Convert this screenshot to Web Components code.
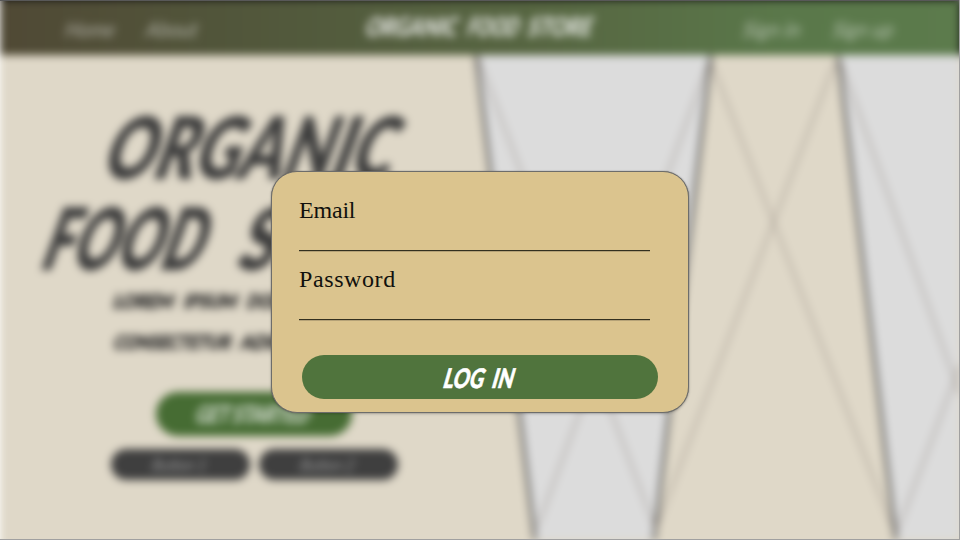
<!DOCTYPE html>
<html lang="en">
<head>
<meta charset="utf-8">
<title>Organic Food Store</title>
<style>
html,body{margin:0;height:100%;overflow:hidden;background:#fff}
</style>
</head>
<body>
<store-app></store-app>
<script>
const define=(name,html,after)=>customElements.define(name,class extends HTMLElement{
  constructor(){super();const t=document.createElement('template');t.innerHTML=html;
    this.attachShadow({mode:'open'}).append(t.content.cloneNode(true));}
  connectedCallback(){if(after)after(this);}
});

// Lettering stretched to the width in its "fit" attribute.
define('brush-text',`<style>
:host{display:flex;justify-content:center;white-space:nowrap;line-height:1;font-family:Lato,"Liberation Sans",sans-serif;font-weight:900}
span{display:block;flex:none;transform-origin:50% 50%}
</style><span><slot></slot></span>`,el=>{
  const s=el.shadowRoot.querySelector('span'),fit=+el.getAttribute('fit'),skew=+(el.getAttribute('skew')||16);
  el.style.width=fit+'px';
  const h=parseFloat(getComputedStyle(s).fontSize)*.72*Math.tan(skew*Math.PI/180);
  s.style.transform='skewX(-'+skew+'deg) scaleX('+((fit-h*.6)/s.offsetWidth)+')';
});

define('nav-bar',`<style>
:host{display:grid;grid-template-columns:1fr 229px 1fr;align-items:center;box-sizing:border-box;height:55px;padding:0 65px 1px;
 background:linear-gradient(90deg,#504935 0%,#52593c 30%,#576742 58%,#5a784a 82%,#5c7b4c 100%)}
div{display:flex;gap:29px;padding-top:2px}
.r{justify-content:flex-end}
brush-text{font-size:21px;font-weight:400;color:rgba(255,255,255,.56)}
.t{display:flex;justify-content:space-between;padding:0 0 2px}
.t brush-text{font-size:26px;font-weight:900;color:rgba(255,255,255,.9)}
</style>
<div><brush-text fit="52">Home</brush-text><brush-text fit="54">About</brush-text></div>
<div class="t" style="gap:0"><brush-text fit="95">ORGANIC</brush-text><brush-text fit="55">FOOD</brush-text><brush-text fit="67">STORE</brush-text></div>
<div class="r"><brush-text fit="60">Sign in</brush-text><brush-text fit="63">Sign up</brush-text></div>`);

define('pill-button',`<style>
:host{display:flex;align-items:center;justify-content:center;box-sizing:border-box;border-radius:30px;background:#4b6d39;color:#fff}
</style><slot></slot>`);

define('hero-copy',`<style>
:host{display:flex;flex-direction:column;align-items:center;width:508px;box-sizing:border-box;padding-top:48px;color:#3c3c3c}
.h{display:flex;gap:22px;font-size:86px;height:91px}
.h brush-text{font-weight:800}
.p{display:flex;gap:8px;font-size:19px;height:41px;color:#2c2c2c}
.p brush-text{-webkit-text-stroke:.8px #2c2c2c}
.lead{padding-top:6px}
.go{width:196px;height:44px;margin:19px 0 13px;background:#466c33}
.go brush-text{font-size:24px;color:rgba(255,255,255,.85)}
div.row{display:flex;gap:9px}
.row pill-button{width:139px;height:31px;background:#3f3f3f}
.row brush-text{font-size:17px;font-weight:400;color:rgba(255,255,255,.45)}
</style>
<div class="h"><brush-text fit="302" skew="20">ORGANIC</brush-text></div>
<div class="h"><brush-text fit="174" skew="20">FOOD</brush-text><brush-text fit="228" skew="20">STORE</brush-text></div>
<div class="lead"></div>
<div class="p"><brush-text fit="62">LOREM</brush-text><brush-text fit="55">IPSUM</brush-text><brush-text fit="58">DOLOR</brush-text><brush-text fit="30">SIT</brush-text><brush-text fit="50">AMET</brush-text></div>
<div class="p"><brush-text fit="119">CONSECTETUR</brush-text><brush-text fit="106">ADIPISCING</brush-text><brush-text fit="46">ELIT</brush-text></div>
<pill-button class="go"><brush-text fit="116">GET STARTED</brush-text></pill-button>
<div class="row"><pill-button><brush-text fit="56">Button 1</brush-text></pill-button><pill-button><brush-text fit="56">Button 2</brush-text></pill-button></div>`);

define('hero-panels',`<style>:host{display:block}svg{display:block}</style>
<svg width="960" height="540" viewBox="0 0 960 540" fill="none">
<path d="M476 55H711L654 540H536ZM838 55H975V555H898Z" fill="#dcdcdc"/>
<path d="M475 45 536 550M712 45 653 550M837 45 897 550" stroke="#404040" stroke-width="2.8"/>
<path d="M477 55 655 528M709 62 537 528M711 62 893 528M835 62 656 528M838 55 972 428M897 532 965 352" stroke="#8a8079" stroke-width="1.2"/>
</svg>`);

define('login-field',`<style>
:host{display:block;width:351px;height:69px;box-sizing:border-box;color:#11110d;font:24px/28px "Liberation Serif",serif}
label{display:block}
input{display:block;width:100%;height:28px;box-sizing:border-box;margin:0;padding:0;border:0;background:linear-gradient(#33301f,#33301f) 0 26px/100% 1px no-repeat,linear-gradient(#b5a277,#b5a277) 0 27px/100% 1px no-repeat;outline:0}
</style><label><slot></slot></label><input>`);

define('login-dialog',`<style>
:host{display:block;box-sizing:border-box;width:418px;height:242px;padding:24px 0 0 27px;border:1.5px solid #6d6d6b;border-radius:26px;background:#dbc48e;box-shadow:0 0 1px rgba(80,80,80,.8),0 1px 3px rgba(0,0,0,.22)}
pill-button{width:356px;height:44px;margin:21px 0 0 3px;background:#50743d}
brush-text{font-size:27px;word-spacing:5px;-webkit-text-stroke:.6px #fff}
</style>
<login-field style="letter-spacing:-.2px">Email</login-field>
<login-field style="letter-spacing:.6px">Password</login-field>
<pill-button><brush-text fit="73">LOG IN</brush-text></pill-button>`);

define('store-app',`<style>
:host{display:grid;width:960px;height:540px;overflow:hidden;position:relative}
:host>*{grid-area:1/1}
.page{display:grid;grid-template-rows:55px 1fr;grid-template-columns:960px;filter:blur(4px);width:960px;height:540px}
.page::before{content:"";grid-area:1/1/3/2;background:#dfd8c8;margin:0 -20px -20px 0}
hero-panels{grid-area:1/1/3/2}
nav-bar{grid-area:1/1;box-shadow:0 -10px 0 #111,8px 0 0 #111}
hero-copy{grid-area:2/1}
login-dialog{place-self:center;transform:translateY(22px)}
.frame{z-index:1;border:solid #a0a0a0;border-width:0 1px 1px 0;background:linear-gradient(#585858,#585858) 0 0/100% 1px no-repeat}
login-dialog{z-index:2}
</style>
<div class="page"><hero-panels></hero-panels><nav-bar></nav-bar><hero-copy></hero-copy></div>
<div class="frame"></div>
<login-dialog></login-dialog>`);
</script>
</body>
</html>
